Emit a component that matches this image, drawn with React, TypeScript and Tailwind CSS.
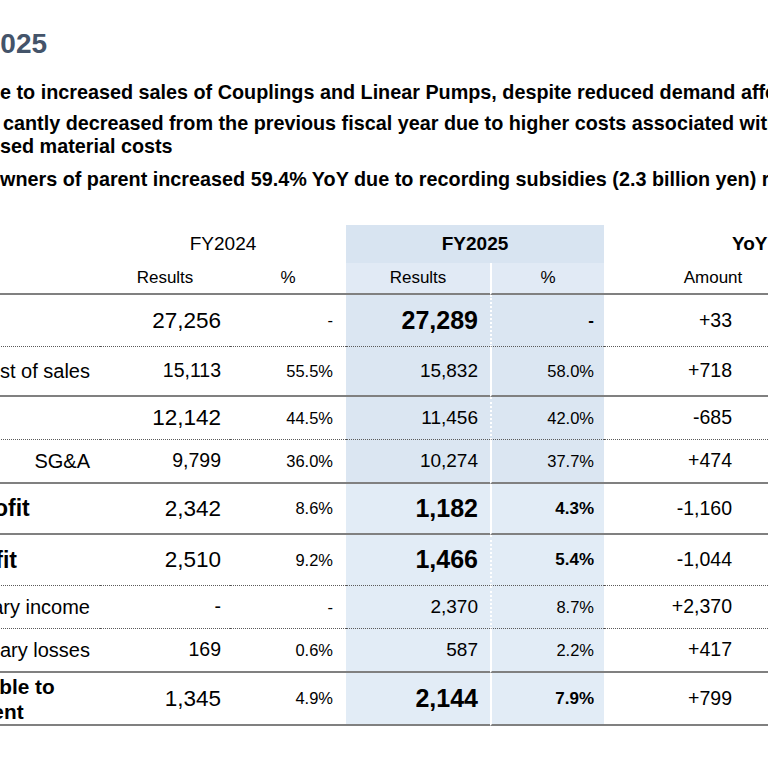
import React from "react";

type R = {
  label: string;
  kind: "major" | "minor" | "two";
  a: string;
  aMajor: boolean;
  ap: string;
  b: string;
  bBold: boolean;
  bp: string;
  y: string;
  h: string;
  line: string;
  bg: string;
};

const DOT = "border-b border-dotted border-[#5a5a5a]";
const SOLID = "border-b-2 border-solid border-[#808080]";
const BG1 = "bg-[#dbe6f2]";
const BG2 = "bg-[#e2ecf6]";

const rows: R[] = [
  { label: "Net sales", kind: "major", a: "27,256", aMajor: true, ap: "-", b: "27,289", bBold: true, bp: "-", y: "+33", h: "h-[52px]", line: DOT, bg: BG1 },
  { label: "Cost of sales", kind: "minor", a: "15,113", aMajor: false, ap: "55.5%", b: "15,832", bBold: false, bp: "58.0%", y: "+718", h: "h-[50px]", line: SOLID, bg: BG1 },
  { label: "Gross profit", kind: "major", a: "12,142", aMajor: true, ap: "44.5%", b: "11,456", bBold: false, bp: "42.0%", y: "-685", h: "h-[43px]", line: DOT, bg: BG1 },
  { label: "SG&A", kind: "minor", a: "9,799", aMajor: false, ap: "36.0%", b: "10,274", bBold: false, bp: "37.7%", y: "+474", h: "h-[44px]", line: SOLID, bg: BG1 },
  { label: "Operating profit", kind: "major", a: "2,342", aMajor: true, ap: "8.6%", b: "1,182", bBold: true, bp: "4.3%", y: "-1,160", h: "h-[51px]", line: SOLID, bg: BG2 },
  { label: "Ordinary profit", kind: "major", a: "2,510", aMajor: true, ap: "9.2%", b: "1,466", bBold: true, bp: "5.4%", y: "-1,044", h: "h-[51px]", line: DOT, bg: BG2 },
  { label: "Extraordinary income", kind: "minor", a: "-", aMajor: false, ap: "-", b: "2,370", bBold: false, bp: "8.7%", y: "+2,370", h: "h-[43px]", line: DOT, bg: BG2 },
  { label: "Extraordinary losses", kind: "minor", a: "169", aMajor: false, ap: "0.6%", b: "587", bBold: false, bp: "2.2%", y: "+417", h: "h-[44px]", line: SOLID, bg: BG2 },
  { label: "Profit attributable to|owners of parent", kind: "two", a: "1,345", aMajor: true, ap: "4.9%", b: "2,144", bBold: true, bp: "7.9%", y: "+799", h: "h-[53px]", line: SOLID, bg: BG2 },
];

function Row({ r }: { r: R }) {
  const cell = `${r.h} ${r.line} flex items-center shrink-0`;
  let label: React.ReactNode;
  if (r.kind === "major") {
    label = (
      <div className={`${cell} w-[250px] pl-[6px] text-[23px] font-bold whitespace-nowrap`}>{r.label}</div>
    );
  } else if (r.kind === "minor") {
    label = (
      <div className={`${cell} w-[250px] justify-end pr-[10px] text-[20px] whitespace-nowrap`}>{r.label}</div>
    );
  } else {
    const [l1, l2] = r.label.split("|");
    label = (
      <div className={`${cell} w-[250px] pl-[6px] text-[20.8px] font-bold leading-[25px] whitespace-nowrap`}>
        <div>
          <div>{l1}</div>
          <div>{l2}</div>
        </div>
      </div>
    );
  }
  return (
    <div className="flex">
      {label}
      <div className={`${cell} w-[130px] justify-end pr-[9px] ${r.aMajor ? "text-[22.5px]" : "text-[19.5px]"}`}>{r.a}</div>
      <div className={`${cell} w-[116px] justify-end pr-[13px] text-[16.5px]`}>{r.ap}</div>
      <div className={`${cell} w-[144px] justify-end pr-[12px] ${r.bg} ${r.bBold ? "text-[25px] font-bold" : "text-[19px]"}`}>{r.b}</div>
      <div className={`${cell} w-[114px] justify-end pr-[10px] ${r.bg} border-l-2 border-l-white ${r.bBold ? "text-[17px] font-bold" : "text-[16.5px]"}`}>{r.bp}</div>
      <div className={`${cell} w-[218px] justify-end pr-[90px] text-[19.5px]`}>{r.y}</div>
      <div className={`${cell} w-[228px]`}></div>
    </div>
  );
}

export default function App() {
  return (
    <div className="w-[768px] h-[768px] overflow-hidden bg-white text-black pt-[27px] font-['Liberation_Sans',Arial,sans-serif]">
      <div className="h-[34px] leading-[34px] text-[28px] font-bold text-[#44546a] whitespace-nowrap ml-[-51px]">FY2025</div>

      <div className="mt-[20px] text-[19.8px] font-bold leading-[23px] whitespace-nowrap">
        <div>e to increased sales of Couplings and Linear Pumps, despite reduced demand affected</div>
        <div className="mt-[8px] pl-[3px]">cantly decreased from the previous fiscal year due to higher costs associated with</div>
        <div>sed material costs</div>
        <div className="mt-[10px]">wners of parent increased 59.4% YoY due to recording subsidies (2.3 billion yen) related</div>
      </div>

      <div className="mt-[34px] ml-[-150px] w-[1100px]">
        <div className="flex h-[38px]">
          <div className="w-[250px] shrink-0"></div>
          <div className="w-[246px] shrink-0 flex items-center justify-center text-[19px]">FY2024</div>
          <div className="w-[258px] shrink-0 flex items-center justify-center text-[19px] font-bold bg-[#d8e4f1]">FY2025</div>
          <div className="w-[346px] shrink-0 flex items-center pl-[128px] text-[19px] font-bold">YoY</div>
        </div>
        <div className="flex h-[32px]">
          <div className={`w-[250px] shrink-0 ${SOLID}`}></div>
          <div className={`w-[130px] shrink-0 flex items-center justify-center text-[17px] ${SOLID}`}>Results</div>
          <div className={`w-[116px] shrink-0 flex items-center justify-center text-[17px] ${SOLID}`}>%</div>
          <div className={`w-[144px] shrink-0 flex items-center justify-center text-[17px] bg-[#e1eaf5] ${SOLID}`}>Results</div>
          <div className={`w-[114px] shrink-0 flex items-center justify-center text-[17px] bg-[#e1eaf5] border-l-2 border-l-white ${SOLID}`}>%</div>
          <div className={`w-[218px] shrink-0 flex items-center justify-center text-[17px] ${SOLID}`}>Amount</div>
          <div className={`w-[228px] shrink-0 ${SOLID}`}></div>
        </div>
        {rows.map((r) => (
          <Row key={r.label} r={r} />
        ))}
      </div>
    </div>
  );
}
